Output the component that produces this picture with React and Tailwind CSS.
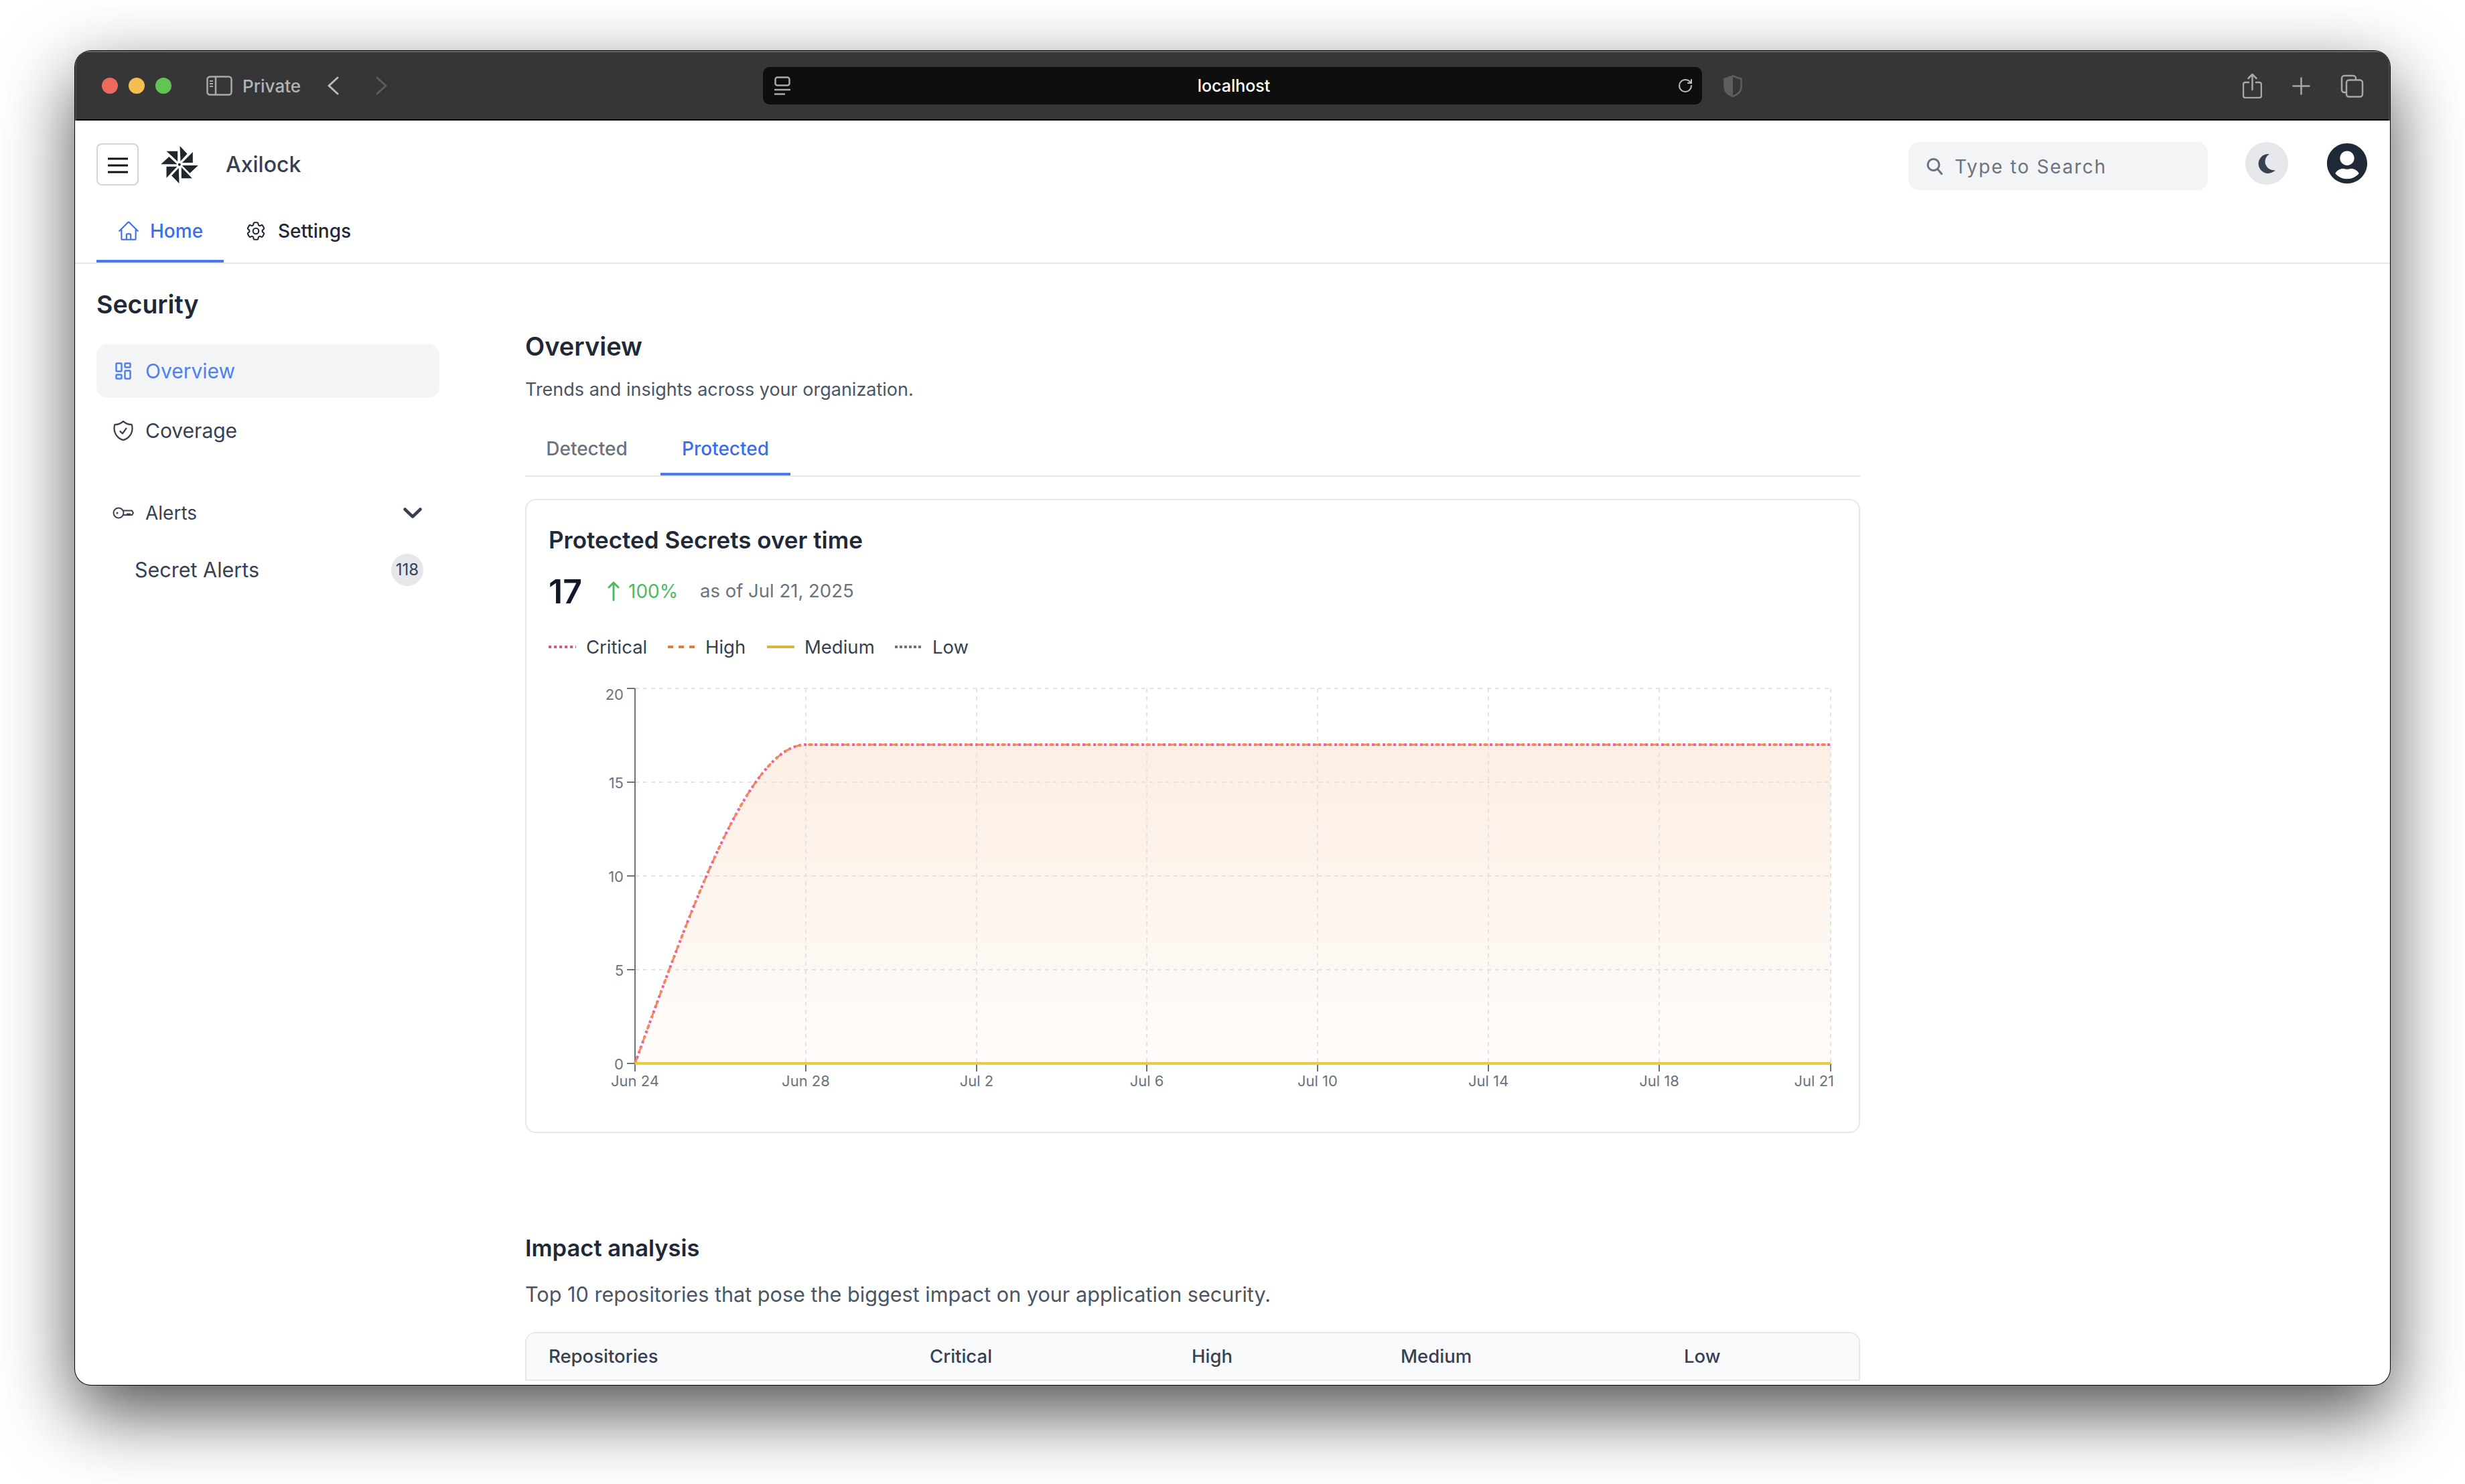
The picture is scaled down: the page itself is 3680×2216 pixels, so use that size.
import React from "react";
import { HiOutlineHome, HiOutlineCog6Tooth, HiOutlineShieldCheck } from "react-icons/hi2";
import { FaUserCircle } from "react-icons/fa";
import { RotateCw } from "lucide-react";

const xTicks = [
  [948, "Jun 24"],
  [1203, "Jun 28"],
  [1458, "Jul 2"],
  [1712, "Jul 6"],
  [1967, "Jul 10"],
  [2222, "Jul 14"],
  [2477, "Jul 18"],
  [2733, "Jul 21"],
];
const yTicks = [
  [1028, "20", 1045],
  [1168, "15", 1177],
  [1308, "10", 1317],
  [1448, "5", 1457],
  [1588, "0", 1597],
];
const curve = "M948,1588 C1033,1353 1118,1112 1203,1112 L2733,1112";

function Logo() {
  return (
    <svg width="56" height="56" viewBox="30 35 167 168" fill="#22272e">
      <polygon points="115,35 148,70 118,103" />
      <polygon points="173,62 173,110 125,110" />
      <polygon points="197,122 125,122 160,157" />
      <polygon points="170,180 122,180 122,130" />
      <polygon points="112,203 78,168 110,133" />
      <polygon points="55,178 55,127 103,127" />
      <polygon points="30,117 103,117 67,83" />
      <polygon points="55,58 105,58 105,105" />
      <circle cx="113" cy="118" r="6" />
    </svg>
  );
}

function LegendLine({ color, dash }) {
  return (
    <svg width="41" height="4" className="shrink-0">
      <line x1="0" y1="2" x2="41" y2="2" stroke={color} strokeWidth="4" strokeDasharray={dash} />
    </svg>
  );
}

function LegendItem({ color, dash, label, w }) {
  return (
    <div className="flex items-center gap-[15px]" style={{ width: w }}>
      <LegendLine color={color} dash={dash} />
      <span className="text-[27.5px] leading-[40px] text-[#374151]">{label}</span>
    </div>
  );
}

function Chart() {
  return (
    <svg width="1925" height="640" viewBox="819 1010 1925 640" className="mt-[24px] block">
      <defs>
        <linearGradient id="area" gradientUnits="userSpaceOnUse" x1="0" y1="1112" x2="0" y2="1588">
          <stop offset="0" stopColor="#fceee3" />
          <stop offset="1" stopColor="#fefcfa" />
        </linearGradient>
      </defs>
      <path d={curve + " L2733,1588 L948,1588 Z"} fill="url(#area)" />
      {yTicks.map(([y]) => (
        <line key={y} x1="948" x2="2733" y1={y} y2={y} stroke="#e5e2e2" strokeWidth="2" strokeDasharray="6 6" />
      ))}
      {xTicks.slice(1).map(([x]) => (
        <line key={x} x1={x} x2={x} y1="1028" y2="1588" stroke="#e5e2e2" strokeWidth="2" strokeDasharray="6 6" />
      ))}
      <line x1="948" x2="948" y1="1028" y2="1600" stroke="#6b7280" strokeWidth="2" />
      {yTicks.map(([y, label, ty]) => (
        <g key={label}>
          <line x1="936" x2="948" y1={y} y2={y} stroke="#6b7280" strokeWidth="2" />
          <text x="931" y={ty} textAnchor="end" fontSize="22" fill="#6b7280">{label}</text>
        </g>
      ))}
      {xTicks.map(([x, label], i) => (
        <g key={label}>
          <line x1={x} x2={x} y1="1588" y2="1600" stroke="#6b7280" strokeWidth="2" />
          <text x={i === 7 ? 2738 : x} y="1622" textAnchor={i === 7 ? "end" : "middle"} fontSize="22" fill="#6b7280">{label}</text>
        </g>
      ))}
      <path d={curve} fill="none" stroke="#ec5fa0" strokeWidth="4" strokeDasharray="4 4" />
      <path d={curve} fill="none" stroke="#f0904e" strokeWidth="3" strokeDasharray="8 10" />
      <line x1="948" x2="2733" y1="1588" y2="1588" stroke="#f0c840" strokeWidth="4" />
    </svg>
  );
}

function TitleBar() {
  return (
    <div className="flex h-[104px] shrink-0 items-center bg-[#363638] pl-[40px] pr-[39px] shadow-[inset_0_2px_0_#6a6a6c,inset_2px_0_0_#4c4c4e,inset_-2px_0_0_#4c4c4e,inset_0_-2px_0_#000]">
      <div className="flex gap-[16px]">
        <div className="h-[24px] w-[24px] rounded-full bg-[#ed6a5e]" />
        <div className="h-[24px] w-[24px] rounded-full bg-[#f4bf4f]" />
        <div className="h-[24px] w-[24px] rounded-full bg-[#61c554]" />
      </div>
      <svg className="ml-[52px]" width="39" height="30" viewBox="0 0 39 30" fill="none" stroke="#a9a9a9" strokeWidth="2.5">
        <rect x="1.5" y="1.5" width="36" height="27" rx="4" />
        <line x1="14" y1="1.5" x2="14" y2="28.5" />
        <path d="M5 8h5M5 12h5M5 16h5" strokeWidth="2" />
      </svg>
      <span className="ml-[15px] w-[87px] whitespace-nowrap text-[26px] font-medium text-[#b4b4b4]">Private</span>
      <svg className="ml-[40px]" width="17" height="28" viewBox="0 0 17 28" fill="none" stroke="#bcbcbc" strokeWidth="3" strokeLinecap="round" strokeLinejoin="round">
        <path d="M15 2 2 14l13 12" />
      </svg>
      <svg className="ml-[55px]" width="17" height="28" viewBox="0 0 17 28" fill="none" stroke="#5c5c5e" strokeWidth="3" strokeLinecap="round" strokeLinejoin="round">
        <path d="M2 2l13 12L2 26" />
      </svg>
      <div className="ml-[561px] flex h-[56px] w-[1402px] items-center rounded-[10px] bg-[#0e0e0e] pl-[17px] pr-[13px]">
        <svg width="24" height="28" viewBox="0 0 24 28" fill="none" stroke="#a9a9a9" strokeWidth="2.5">
          <rect x="1.5" y="1.5" width="21" height="12" rx="3" />
          <line x1="0" y1="20" x2="24" y2="20" />
          <line x1="0" y1="26.5" x2="16" y2="26.5" />
        </svg>
        <span className="flex-1 pt-[2px] text-center text-[25px] font-medium text-white">localhost</span>
        <RotateCw size={24} color="#c0c0c0" strokeWidth={2} />
      </div>
      <svg className="ml-[32px]" width="28" height="33" viewBox="0 0 28 33">
        <path d="M14 1.5 26.5 6v12c0 7-6 11.5-12.5 14C7.500 29.500 1.500 25 1.500 18V6Z" fill="none" stroke="#5e5e60" strokeWidth="2.5" />
        <path d="M14 1.500 1.500 6v12c0 7 6 11.500 12.500 14Z" fill="#5e5e60" />
      </svg>
      <div className="flex-1" />
      <svg width="29" height="38" viewBox="0 0 29 38" fill="none" stroke="#a9a9a9" strokeWidth="2.5" strokeLinecap="round" strokeLinejoin="round">
        <path d="M9 14H4a3 3 0 0 0-3 3v17a3 3 0 0 0 3 3h21a3 3 0 0 0 3-3V17a3 3 0 0 0-3-3h-5" />
        <path d="M14.500 25V2M8.500 8l6-6 6 6" />
      </svg>
      <svg className="ml-[45px]" width="27" height="27" viewBox="0 0 27 27" stroke="#a9a9a9" strokeWidth="2.5" strokeLinecap="round">
        <path d="M13.500 1.500v24M1.500 13.500h24" />
      </svg>
      <svg className="ml-[45px]" width="35" height="35" viewBox="0 0 35 35" fill="none" stroke="#a9a9a9" strokeWidth="2.5">
        <path d="M8 27H6a4 4 0 0 1-4-4V6a4 4 0 0 1 4-4h13a4 4 0 0 1 4 4v2" />
        <rect x="9" y="8.500" width="24" height="25" rx="4" />
      </svg>
    </div>
  );
}

function Header() {
  return (
    <div className="shrink-0 border-b-2 border-[#e5e7eb]">
      <div className="flex h-[97px] items-start justify-between pl-[32px] pr-[33px] pt-[34px]">
        <div className="flex items-center">
          <div className="flex h-[63px] w-[63px] items-center justify-center rounded-[8px] border-2 border-[#d1d5db] pt-[3px]">
            <svg width="30" height="24" viewBox="0 0 30 24" stroke="#111" strokeWidth="3">
              <path d="M0 2h30M0 12h30M0 22h30" />
            </svg>
          </div>
          <div className="ml-[33px]"><Logo /></div>
          <span className="ml-[41px] text-[32px] font-medium text-[#374151]">Axilock</span>
        </div>
        <div className="-mt-[2px] flex items-start">
          <div className="flex h-[72px] w-[447px] items-center rounded-[16px] bg-[#f3f4f6] pl-[27px]">
            <svg width="24" height="26" viewBox="0 0 24 26" fill="none" stroke="#6b7280" strokeWidth="3" strokeLinecap="round">
              <circle cx="10.500" cy="11" r="8.500" />
              <path d="m17 18 6 7" />
            </svg>
            <span className="ml-[18px] pt-[2px] text-[28px] tracking-[0.07em] text-[#6b7280]">Type to Search</span>
          </div>
          <div className="ml-[56px] flex h-[64px] w-[64px] items-center justify-center rounded-full bg-[#e5e7eb]">
            <svg width="28" height="30" viewBox="0 0 28 30" fill="#374151">
              <path d="M18 1A14.500 14.500 0 1 0 27 25A13 13 0 0 1 18 1Z" />
            </svg>
          </div>
          <FaUserCircle className="ml-[57px] mt-[1px]" size={62} color="#1f2937" />
        </div>
      </div>
      <div className="ml-[32px] mt-[25px] flex h-[90px]">
        <div className="flex w-[190px] items-center border-b-4 border-[#4a7aea] pl-[31px] text-[#3b6fe8]">
          <HiOutlineHome size={34} />
          <span className="ml-[15px] text-[28px] font-medium">Home</span>
        </div>
        <div className="flex items-center border-b-4 border-transparent pl-[31px] text-[#1f2937]">
          <HiOutlineCog6Tooth size={34} />
          <span className="ml-[16px] text-[28px] font-medium">Settings</span>
        </div>
      </div>
    </div>
  );
}

function Sidebar() {
  return (
    <div className="w-[672px] shrink-0 pl-[32px] pt-[33px]">
      <div className="w-[512px]">
        <h2 className="text-[37.5px] font-semibold leading-[56px] text-[#1f2937]">Security</h2>
        <div className="mt-[31px] flex h-[80px] items-center rounded-[16px] bg-[#f3f4f6] pl-[28px] text-[#4f80f0]">
          <svg width="24" height="26" viewBox="0 0 24 26" fill="none" stroke="#4f80f0" strokeWidth="2.5">
            <rect x="1.500" y="1.500" width="8" height="12" rx="1" />
            <rect x="14.500" y="1.500" width="8" height="6" rx="1" />
            <rect x="1.500" y="18.500" width="8" height="6" rx="1" />
            <rect x="14.500" y="12.500" width="8" height="12" rx="1" />
          </svg>
          <span className="ml-[21px] text-[30px]">Overview</span>
        </div>
        <div className="mt-[9px] flex h-[80px] items-center pl-[28px] text-[#374151]">
          <div className="flex w-[24px] justify-center">
            <HiOutlineShieldCheck size={36} className="shrink-0" />
          </div>
          <span className="ml-[21px] text-[30px]">Coverage</span>
        </div>
        <div className="mt-[55px] flex h-[56px] items-center pl-[24px] pr-[26px] text-[#374151]">
          <svg width="32" height="18" viewBox="0 0 32 18" fill="none" stroke="#374151" strokeWidth="2">
            <circle cx="9" cy="9" r="7.500" />
            <circle cx="7" cy="9" r="1.500" fill="#374151" stroke="none" />
            <path d="M16 5.500h13l2 3.500-2 3h-2l-1-1.500-1 1.500-1-1.500-1 1.500-1-1.500-1 1.500h-5" />
          </svg>
          <span className="ml-[17px] flex-1 text-[28px]">Alerts</span>
          <svg width="28" height="16" viewBox="0 0 28 16" fill="none" stroke="#374151" strokeWidth="4.500" strokeLinecap="round" strokeLinejoin="round">
            <path d="m2.500 2.500 11.500 11 11.500-11" />
          </svg>
        </div>
        <div className="mt-[25px] flex h-[64px] items-center justify-between pl-[57px] pr-[24px]">
          <span className="text-[30.500px] text-[#374151]">Secret Alerts</span>
          <span className="flex h-[48px] w-[48px] items-center justify-center rounded-full bg-[#e5e7eb] text-[24px] text-[#374151]">118</span>
        </div>
      </div>
    </div>
  );
}

function Main() {
  return (
    <div className="w-[1993px] shrink-0 pt-[95px]">
      <h1 className="text-[38px] font-semibold leading-[56px] text-[#1f2937]">Overview</h1>
      <p className="mt-[17px] text-[27px] leading-[40px] text-[#4b5563]">Trends and insights across your organization.</p>
      <div className="mt-[32px] flex border-b-2 border-[#e5e7eb]">
        <div className="flex h-[76px] w-[184px] items-center justify-center border-b-4 border-transparent text-[28px] font-medium text-[#6b7280]">Detected</div>
        <div className="ml-[18px] flex h-[76px] w-[194px] items-center justify-center border-b-4 border-[#4a7aea] text-[28px] font-medium text-[#3b6fe8]">Protected</div>
      </div>
      <div className="mt-[33px] h-[947px] rounded-[16px] border-2 border-[#e5e7eb] pl-[33px] pt-[35px]">
        <h3 className="text-[35px] font-semibold leading-[48px] text-[#1f2937]">Protected Secrets over time</h3>
        <div className="mt-[23px] flex h-[60px] items-center">
          <span className="w-[88px] text-[50px] font-semibold text-[#111827]">17</span>
          <svg width="18" height="30" viewBox="0 0 18 30" fill="none" stroke="#4dbb5f" strokeWidth="3" strokeLinecap="round" strokeLinejoin="round">
            <path d="M9 28V2M2 9l7-7 7 7" />
          </svg>
          <span className="ml-[13px] w-[107px] text-[28px] text-[#4dbb5f]">100%</span>
          <span className="text-[27.500px] text-[#6b7280]">as of Jul 21, 2025</span>
        </div>
        <div className="mt-[33px] flex h-[40px] items-center">
          <LegendItem color="#d9558d" dash="4 4" label="Critical" w={178} />
          <LegendItem color="#e87b3a" dash="8 8" label="High" w={148} />
          <LegendItem color="#e0b23e" dash="none" label="Medium" w={191} />
          <LegendItem color="#6b7280" dash="4 3" label="Low" w={110} />
        </div>
        <Chart />
      </div>
      <h2 className="mt-[148px] text-[34.500px] font-semibold leading-[48px] text-[#1f2937]">Impact analysis</h2>
      <p className="mt-[21px] text-[30.600px] leading-[48px] text-[#4b5563]">Top 10 repositories that pose the biggest impact on your application security.</p>
      <div className="mt-[32px] rounded-t-[16px] border-x-2 border-t-2 border-[#e5e7eb]">
        <div className="flex h-[71px] items-center rounded-t-[14px] border-b-2 border-[#e5e7eb] bg-[#f9fafb] pl-[33px] text-[27.500px] font-medium text-[#374151]">
          <span className="w-[569px]">Repositories</span>
          <span className="w-[391px]">Critical</span>
          <span className="w-[312px]">High</span>
          <span className="w-[423px]">Medium</span>
          <span>Low</span>
        </div>
      </div>
    </div>
  );
}

export default function App() {
  return (
    <div className="h-[2216px] w-[3680px] overflow-hidden bg-white pl-[112px] pt-[76px] font-[Inter,sans-serif]">
      <div className="flex h-[1992px] w-[3456px] flex-col overflow-hidden rounded-[24px] bg-white shadow-[0_0_0_1px_#000,0_40px_110px_rgba(0,0,0,0.7)]">
        <TitleBar />
        <Header />
        <div className="flex min-h-0 flex-1">
          <Sidebar />
          <Main />
        </div>
      </div>
    </div>
  );
}
